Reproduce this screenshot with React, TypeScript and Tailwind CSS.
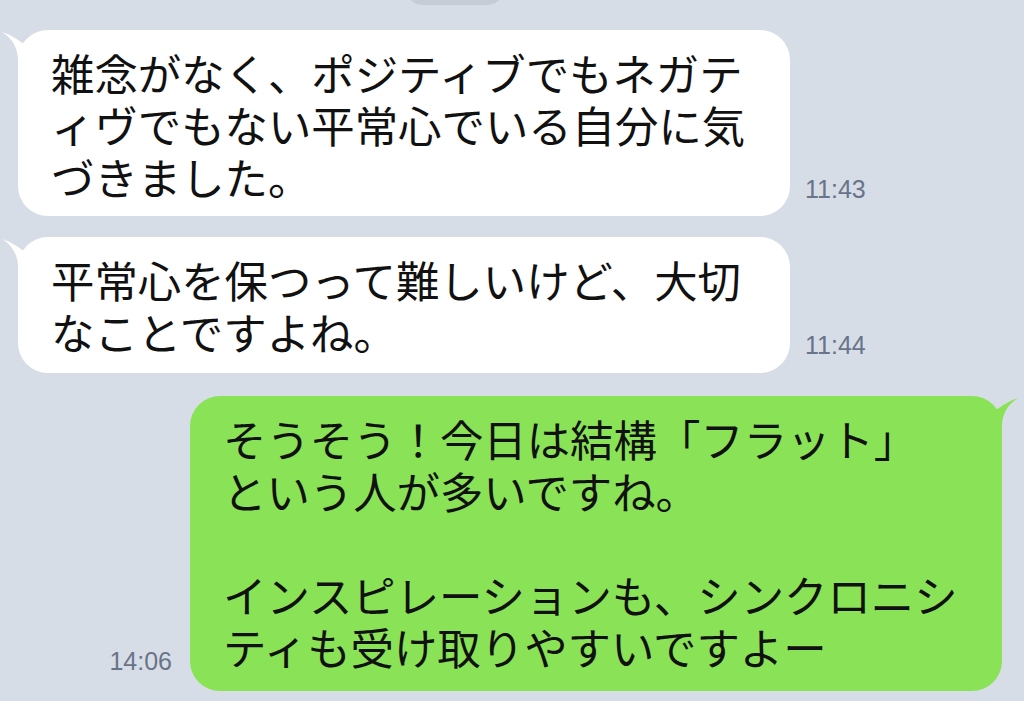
import React from "react";

const Tail = ({ color, flip }: { color: string; flip?: boolean }) => (
  <svg
    className={flip ? "absolute right-[-18px] top-0 -scale-x-100" : "absolute left-[-18px] top-0"}
    width="40"
    height="40"
    viewBox="0 0 40 40"
  >
    <path d="M2 2 C9 4 17 9 24 14 L40 24 L40 40 L18 40 L18 30 C18 18 12 8 2 2 Z" fill={color} />
  </svg>
);

const Lines = ({ lines }: { lines: string[] }) => (
  <div>
    {lines.map((l, i) => (
      <div key={i} className="h-[52px] leading-[52px] whitespace-pre">
        {l || "\u00a0"}
      </div>
    ))}
  </div>
);

const Time = ({ t, cls }: { t: string; cls: string }) => (
  <div
    className={`font-['Liberation_Sans',Arial,sans-serif] text-[25px] leading-[25px] text-[#687489] ${cls}`}
  >
    {t}
  </div>
);

export default function App() {
  return (
    <div className="w-[1024px] h-[701px] overflow-hidden bg-[#d7dde6] font-['Noto_Sans_CJK_JP','Noto_Sans',sans-serif] text-[#111111] text-[43.4px]">
      <div className="flex h-[5px] overflow-hidden pl-[407px]">
        <div className="w-[96px] h-[30px] mt-[-25px] rounded-full bg-[#c6ccd6]" />
      </div>

      <div className="flex items-end pl-[18px] mt-[25px]">
        <div className="relative w-[772px] bg-white rounded-[30px] pl-[33px] pt-[16px] pb-[14px]">
          <Tail color="#ffffff" />
          <Lines
            lines={[
              "雑念がなく、ポジティブでもネガテ",
              "ィヴでもない平常心でいる自分に気",
              "づきました。",
            ]}
          />
        </div>
        <Time t="11:43" cls="ml-[15px] mb-[14px]" />
      </div>

      <div className="flex items-end pl-[18px] mt-[21px]">
        <div className="relative w-[772px] bg-white rounded-[30px] pl-[33px] pt-[16px] pb-[16px]">
          <Tail color="#ffffff" />
          <Lines lines={["平常心を保つって難しいけど、大切", "なことですよね。"]} />
        </div>
        <Time t="11:44" cls="ml-[15px] mb-[15px]" />
      </div>

      <div className="flex items-end justify-end pr-[22px] mt-[23px]">
        <Time t="14:06" cls="mr-[18px] mb-[17px]" />
        <div className="relative w-[812px] bg-[#8ae257] rounded-[30px] pl-[33px] pt-[16px] pb-[19px]">
          <Tail color="#8ae257" flip />
          <Lines
            lines={[
              "そうそう！今日は結構「フラット」",
              "という人が多いですね。",
              "",
              "インスピレーションも、シンクロニシ",
              "ティも受け取りやすいですよー",
            ]}
          />
        </div>
      </div>
    </div>
  );
}
